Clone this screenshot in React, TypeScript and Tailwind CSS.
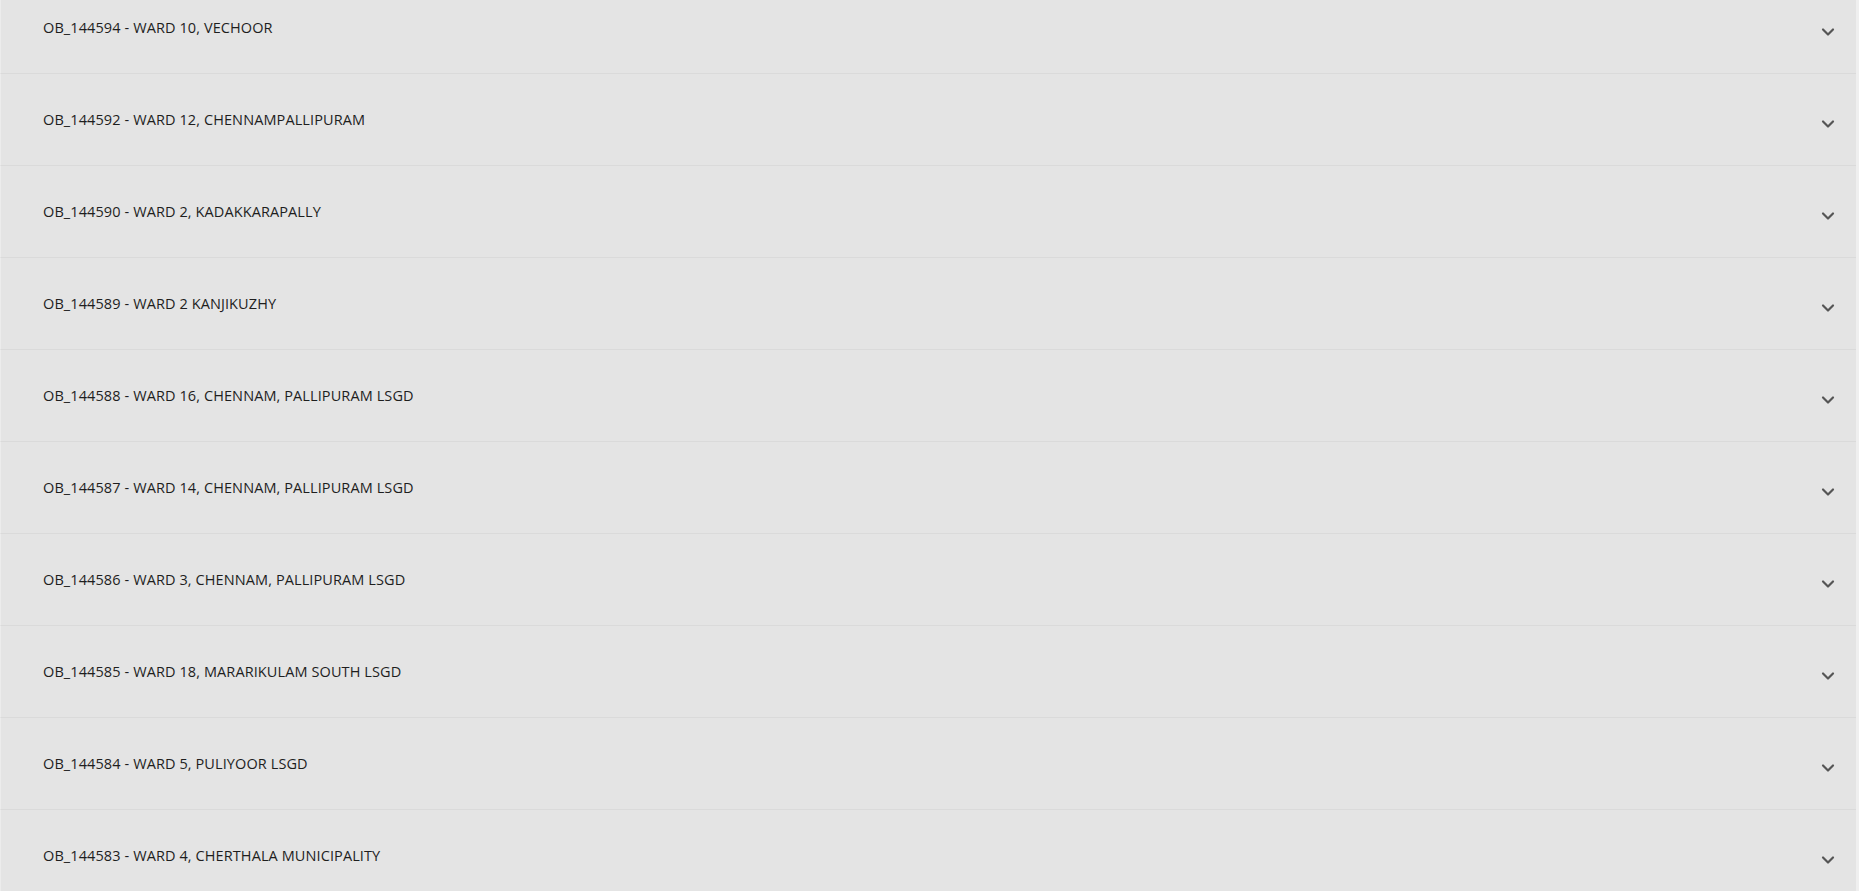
import { ChevronDown } from "lucide-react";

const ORDERS = [
  "OB_144594 - WARD 10, VECHOOR",
  "OB_144592 - WARD 12, CHENNAMPALLIPURAM",
  "OB_144590 - WARD 2, KADAKKARAPALLY",
  "OB_144589 - WARD 2 KANJIKUZHY",
  "OB_144588 - WARD 16, CHENNAM, PALLIPURAM LSGD",
  "OB_144587 - WARD 14, CHENNAM, PALLIPURAM LSGD",
  "OB_144586 - WARD 3, CHENNAM, PALLIPURAM LSGD",
  "OB_144585 - WARD 18, MARARIKULAM SOUTH LSGD",
  "OB_144584 - WARD 5, PULIYOOR LSGD",
  "OB_144583 - WARD 4, CHERTHALA MUNICIPALITY",
];

export default function App() {
  return (
    <div className="h-[891px] overflow-hidden bg-[#efefef] font-['Open_Sans',sans-serif]">
      <div className="-mt-[18px] w-[1856px]">
        {ORDERS.map((title) => (
          <button
            key={title}
            className="flex h-[92px] w-full items-center justify-between border-b border-l border-[#dadada] border-l-[#ececec] bg-[#e4e4e4] pl-[42px] pr-[18px] text-left"
          >
            <span className="text-[14.5px] tracking-[0.1px] text-[#1e1e1e]">{title}</span>
            <ChevronDown className="mt-[9px] h-[20px] w-[20px] text-[#555]" strokeWidth={2.6} />
          </button>
        ))}
      </div>
    </div>
  );
}
